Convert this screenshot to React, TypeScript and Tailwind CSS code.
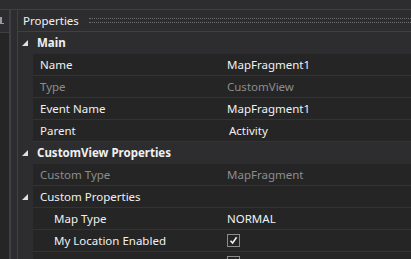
import React from "react"

type Row =
  | { kind: "cat"; label: string }
  | { kind: "sub"; label: string }
  | { kind: "prop"; label: string; value?: string; readOnly?: boolean; nested?: boolean; check?: boolean; shift?: boolean }

const rows: Row[] = [
  { kind: "cat", label: "Main" },
  { kind: "prop", label: "Name", value: "MapFragment1" },
  { kind: "prop", label: "Type", value: "CustomView", readOnly: true },
  { kind: "prop", label: "Event Name", value: "MapFragment1" },
  { kind: "prop", label: "Parent", value: "Activity", shift: true },
  { kind: "cat", label: "CustomView Properties" },
  { kind: "prop", label: "Custom Type", value: "MapFragment", readOnly: true },
  { kind: "sub", label: "Custom Properties" },
  { kind: "prop", label: "Map Type", value: "NORMAL", nested: true },
  { kind: "prop", label: "My Location Enabled", check: true, nested: true },
  { kind: "prop", label: "Traffic Enabled", check: true, nested: true },
]

function Expander() {
  return (
    <svg width="6" height="6" viewBox="0 0 6 6" className="block">
      <polygon points="6,0 6,6 0,6" fill="#e0e0e0" />
    </svg>
  )
}

function CheckBox() {
  return (
    <div className="flex h-[13px] w-[13px] items-center justify-center border border-[#8c8c8c] bg-[#252526]">
      <svg width="9" height="9" viewBox="0 0 9 9">
        <path d="M1.5 4.8 L3.6 7 L7.6 1.2" fill="none" stroke="#f1f1f1" strokeWidth="1.6" />
      </svg>
    </div>
  )
}

function PropertyRow({ row }: { row: Row }) {
  if (row.kind === "cat") {
    return (
      <div className="flex h-[22px] items-center bg-[#2d2d30]">
        <div className="flex w-[15px] shrink-0 justify-end pr-[5px]">
          <Expander />
        </div>
        <span className="pl-[4px] font-bold text-[#f1f1f1]">{row.label}</span>
      </div>
    )
  }
  if (row.kind === "sub") {
    return (
      <div className="flex h-[22px] items-center">
        <div className="flex h-full w-[15px] shrink-0 items-center justify-end bg-[#2d2d30] pr-[5px]">
          <Expander />
        </div>
        <div className="flex h-full flex-1 items-center border-b border-[#333337] bg-[#252526] pl-[7px] text-[#f1f1f1]">
          {row.label}
        </div>
      </div>
    )
  }
  return (
    <div className="flex h-[22px]">
      <div className="h-full w-[15px] shrink-0 bg-[#2d2d30]" />
      <div className="flex h-full flex-1 items-center border-b border-[#333337] bg-[#252526]">
        <div
          className={`w-[194px] shrink-0 ${row.nested ? "pl-[21px]" : "pl-[7px]"} ${row.readOnly ? "text-[#8d8d8d]" : "text-[#f1f1f1]"}`}
        >
          {row.label}
        </div>
        {row.check ? (
          <CheckBox />
        ) : (
          <span className={`${row.shift ? "pl-[2px]" : ""} ${row.readOnly ? "text-[#8d8d8d]" : "text-[#f1f1f1]"}`}>
            {row.value}
          </span>
        )}
      </div>
    </div>
  )
}

export default function App() {
  return (
    <main className="flex h-[259px] w-[411px] flex-col overflow-hidden bg-[#2d2d30] text-[11.5px] leading-none [font-family:'Noto_Sans',sans-serif]">
      <div className="h-[10px] shrink-0 border-b border-[#3f3f46]" />
      <div className="flex flex-1">

        <aside className="flex w-[11px] shrink-0 flex-col border-r-2 border-[#3f3f46]">
          <div className="relative h-[22px] bg-[#2d2d30]">
            <div className="absolute left-0 top-[7px] h-[7px] w-[2px] bg-[#9a9a9a]" />
            <div className="absolute left-0 top-[13px] h-[1px] w-[4px] bg-[#9a9a9a]" />
          </div>
          <div className="flex-1 border-t border-[#3f3f46] bg-[#252526]" />
        </aside>

        <div className="w-[6px] shrink-0" />

        <section className="flex flex-1 flex-col border-l border-[#3f3f46]">
          <header className="flex h-[22px] shrink-0 items-center border-b border-[#3f3f46] pl-[5px]">
            <span className="text-[#f1f1f1]">Properties</span>
            <div className="ml-[10px] h-[5px] flex-1 border-y border-dotted border-[#6e6e6e]" />
          </header>

          <div className="flex flex-col">
            {rows.map((row, i) => (
              <PropertyRow key={i} row={row} />
            ))}
          </div>
        </section>

      </div>
    </main>
  )
}
